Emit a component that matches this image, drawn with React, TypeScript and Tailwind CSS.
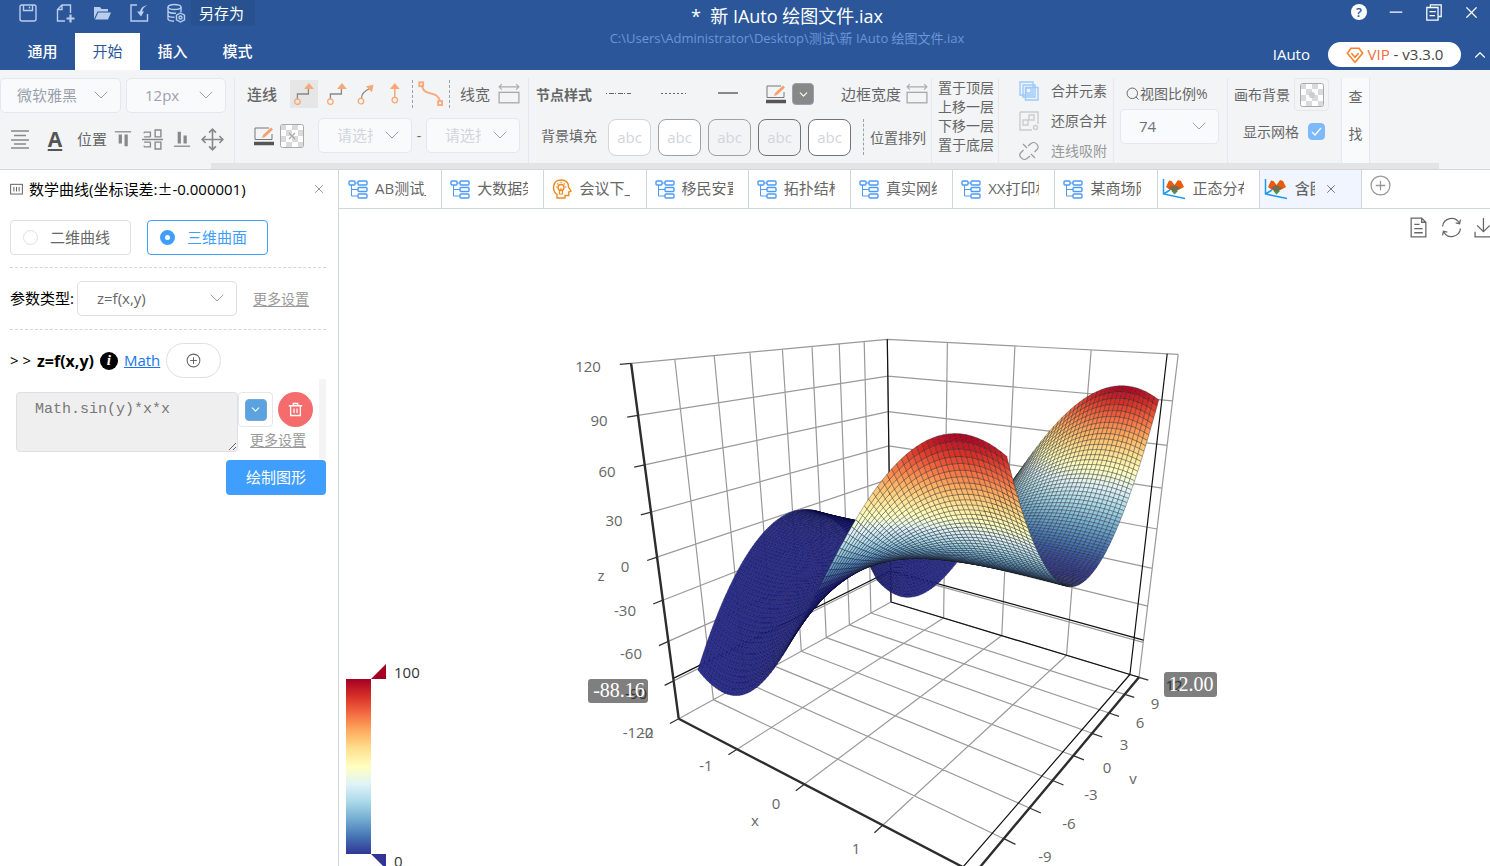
import { useMemo, useState, type ReactNode } from "react";
import { ChevronDown, ChevronUp, Minus, X } from "lucide-react";
import clsx from "clsx";

type Vec3 = [number, number, number];

/* ---------- 3D chart ---------- */

const CHART_W = 1151;
const CHART_H = 657;

const RAMP = [
  [49, 54, 149],
  [69, 117, 180],
  [116, 173, 209],
  [171, 217, 233],
  [224, 243, 248],
  [255, 255, 191],
  [254, 224, 144],
  [253, 174, 97],
  [244, 109, 67],
  [215, 48, 39],
  [165, 0, 38],
];

function rampColor(z: number) {
  const t = Math.min(Math.max(z / 100, 0), 1) * (RAMP.length - 1);
  const i = Math.min(Math.floor(t), RAMP.length - 2);
  const f = t - i;
  const [r, g, b] = RAMP[i].map((c, k) => Math.round(c + (RAMP[i + 1][k] - c) * f));
  return `rgb(${r},${g},${b})`;
}

// Distance from the camera, relative to the front left bottom corner of the box
function depth(u: number, v: number, w: number) {
  return 1 - 0.263 * u + 0.368 * v - 0.1663 * w;
}

// Perspective projection of the unit box (u = x axis, v = y axis, w = z axis)
function project([u, v, w]: Vec3) {
  const d = depth(u, v, w);
  const x = (339.7 + 128.9 * u + 415.4 * v - 96.2 * w) / d;
  const y = (509.7 - 20.1 * u + 27.9 * v - 381 * w) / d;
  return `${x.toFixed(1)} ${y.toFixed(1)}`;
}

const seg = (a: Vec3, b: Vec3) => `M${project(a)}L${project(b)}`;

function buildSurface() {
  const NX = 79;
  const NY = 100;
  const at = (i: number, j: number): Vec3 => {
    const x = -2 + 0.05 * i;
    const y = -10 + 0.2 * j;
    const z = Math.sin(x) * y * y;
    return [(x + 2) / 4, (y + 12) / 24, (z + 120) / 240];
  };
  const cells: { d: string; fill: string; line: string; far: number }[] = [];
  for (let i = 0; i < NX; i++) {
    for (let j = 0; j < NY; j++) {
      const mid = at(i + 0.5, j + 0.5);
      const z = mid[2] * 240 - 120;
      cells.push({
        d: `M${project(at(i, j))}L${project(at(i + 1, j))}L${project(at(i + 1, j + 1))}L${project(at(i, j + 1))}Z`,
        fill: z < 0 ? "#2c3090" : rampColor(z),
        line: z < 0 ? "#0a0a38" : "#1a1a1a",
        far: depth(...mid),
      });
    }
  }
  return cells.sort((p, q) => q.far - p.far);
}

function buildGrid() {
  let grid = "";
  let ticks = "";
  for (let i = 0; i <= 8; i++) {
    const t = i / 8;
    grid += seg([0, t, 0], [0, t, 1]) + seg([0, 0, t], [0, 1, t]);
    grid += seg([0, 1, t], [1, 1, t]) + seg([0, t, 0], [1, t, 0]);
    ticks += seg([0, 0, t], [0, -0.03, t]) + seg([1, t, 0], [1.03, t, 0]);
  }
  for (let i = 0; i <= 4; i++) {
    const t = i / 4;
    grid += seg([t, 1, 0], [t, 1, 1]) + seg([t, 0, 0], [t, 1, 0]);
    ticks += seg([t, 0, 0], [t, -0.03, 0]);
  }
  const pointer =
    seg([0, 1, 0], [0, 1, 1]) +
    seg([0, 1, 0], [1, 1, 0]) +
    seg([0.97, 1, 0], [0.97, 1, 1]) +
    seg([0.97, 0, 0], [0.97, 1, 0]) +
    seg([0, 0, 0.133], [0, 1, 0.133]) +
    seg([0, 1, 0.133], [1, 1, 0.133]);
  const axes = seg([0, 0, 0], [0, 0, 1]) + seg([0, 0, 0], [1, 0, 0]) + seg([1, 0, 0], [1, 1, 0]);
  return { grid, ticks, pointer, axes };
}

const AXIS_LABELS: [string, number, number][] = [
  ["120", 249, 158],
  ["90", 260, 212],
  ["60", 268, 263],
  ["30", 275, 312],
  ["0", 286, 358],
  ["-30", 286, 402],
  ["-60", 292, 445],
  ["-90", 297, 485],
  ["-120", 299, 524],
  ["-2", 308, 524],
  ["z", 262, 367],
  ["-1", 367, 557],
  ["0", 437, 595],
  ["1", 517, 640],
  ["x", 416, 612],
  ["12", 835, 477],
  ["9", 816, 495],
  ["6", 801, 514],
  ["3", 785, 536],
  ["0", 768, 559],
  ["-3", 752, 586],
  ["-6", 730, 615],
  ["-9", 706, 648],
  ["v", 794, 570],
];

function SurfaceChart() {
  const cells = useMemo(buildSurface, []);
  const { grid, ticks, pointer, axes } = useMemo(buildGrid, []);
  return (
    <svg
      viewBox={`0 0 ${CHART_W} ${CHART_H}`}
      preserveAspectRatio="xMinYMin slice"
      className="block h-full w-full font-['Open_Sans','Noto_Sans_CJK_SC',sans-serif]"
    >
      <defs>
        <linearGradient id="ramp" x1="0" y1="1" x2="0" y2="0">
          {RAMP.map(([r, g, b], i) => (
            <stop key={i} offset={i / (RAMP.length - 1)} stopColor={`rgb(${r},${g},${b})`} />
          ))}
        </linearGradient>
      </defs>

      <path d={grid} fill="none" stroke="#999" strokeWidth="1.2" />
      <path d={pointer} fill="none" stroke="#111" strokeWidth="1.2" />
      <path d={ticks} fill="none" stroke="#333" strokeWidth="1.3" />
      <path d={axes} fill="none" stroke="#2d2d2d" strokeWidth="2.4" />

      <g strokeOpacity="0.5" strokeWidth="0.7" strokeLinejoin="round">
        {cells.map((c, i) => (
          <path key={i} d={c.d} fill={c.fill} stroke={c.line} />
        ))}
      </g>

      <g fill="#666" fontSize="15" textAnchor="middle">
        {AXIS_LABELS.map(([label, x, y], i) => (
          <text key={i} x={x} y={y + 5}>
            {label}
          </text>
        ))}
      </g>

      <g fontFamily="'Liberation Serif', serif" fontSize="20" textAnchor="middle">
        <rect x="249" y="470" width="60" height="24" rx="3" fill="#000" fillOpacity="0.5" />
        <text x="280" y="488" fill="#fff">-88.16</text>
        <rect x="825" y="463" width="53" height="25" rx="3" fill="#000" fillOpacity="0.5" />
        <text x="852" y="482" fill="#fff">12.00</text>
      </g>

      <rect x="7" y="470" width="25" height="175" fill="url(#ramp)" />
      <path d="M32 470L47 455V470Z" fill="#a50026" />
      <path d="M32 645L47 660V645Z" fill="#313695" />
      <g fill="#333" fontSize="15">
        <text x="55" y="469">100</text>
        <text x="55" y="658">0</text>
      </g>
    </svg>
  );
}

/* ---------- icons ---------- */

interface IconProps {
  size?: number;
  children: ReactNode;
  className?: string;
}

function Icon({ size = 20, children, className }: IconProps) {
  return (
    <svg
      width={size}
      height={size}
      viewBox="0 0 20 20"
      fill="none"
      stroke="currentColor"
      strokeWidth="1.4"
      className={clsx("block shrink-0", className)}
    >
      {children}
    </svg>
  );
}

const SaveIcon = () => (
  <Icon>
    <rect x="2" y="2" width="16" height="16" rx="2" />
    <path d="M5.500 2V7.500H14.500V2M11.500 3.500V5.500" />
  </Icon>
);

const NewFileIcon = () => (
  <Icon>
    <path d="M10 18H2.500V6.500L7 2H15.500V10M7 2V6.500H2.500" />
    <path d="M15.500 11.500V19.500M11.500 15.500H19.500" strokeWidth="2.200" />
  </Icon>
);

const OpenIcon = () => (
  <Icon>
    <path d="M2 16V4H8L9.500 6H16V8.500H5.500L2 16Z" fill="currentColor" stroke="none" />
    <path d="M6.200 9.500H19L16 16.500H3Z" fill="currentColor" stroke="none" />
  </Icon>
);

const ImportIcon = () => (
  <Icon>
    <path d="M8 2H2V18H18.500V11" />
    <path d="M18.500 2C14 3 11.500 5 11 8.500H8L12 13.500L15 8.500H13.200C13.500 6 15 4 18.500 2Z" fill="currentColor" stroke="none" />
  </Icon>
);

const DatabaseIcon = () => (
  <Icon>
    <ellipse cx="8.500" cy="4" rx="6.500" ry="2.500" />
    <path d="M2 4V16C2 17.300 4 18 8 18.300M15 4V9M2 8C2 9.500 5 10.500 10 10.200M2 12C2 13.500 5 14.300 8.500 14.300" />
    <path d="M14.500 10L18.500 12.200V16.800L14.500 19L10.500 16.800V12.200Z" />
    <circle cx="14.500" cy="14.500" r="1.500" />
  </Icon>
);

const RestoreIcon = () => (
  <Icon size={18}>
    <path d="M6 5V2H18V15H15" />
    <path d="M2 5H14.500V19H2ZM5 9.500H12M5 14H11" />
  </Icon>
);

const DiamondIcon = () => (
  <Icon size={18} className="text-[#f5802a]">
    <path d="M5.500 2.500H14.500L18.500 8L10 18L1.500 8ZM6 8L10 12.500L14 8" strokeWidth="1.700" />
  </Icon>
);

const TreeIcon = () => (
  <Icon className="text-[#4d9bf5]">
    <rect x="1" y="2" width="6" height="4" rx="1" />
    <rect x="10" y="2" width="9" height="4" rx="1" />
    <rect x="10" y="8.500" width="9" height="4" rx="1" />
    <rect x="10" y="15" width="9" height="4" rx="1" />
    <path d="M7 4H10M3.500 6V17H10M3.500 10.500H10" strokeWidth="1" />
  </Icon>
);

const HeadIcon = () => (
  <Icon className="text-[#ee8a1f]">
    <path d="M5 19V15.500C0 12 0 1 9 1C15 1 16.500 4.500 16.500 8L19 12L16.800 13V16.500H13V19Z" />
    <circle cx="9" cy="8.500" r="3" />
    <path d="M7.500 11.500V15H10.500V11.500M9 9V12M9 2.500V4M4 8H5M13 8H14.500M5.300 4.500L6.300 5.500M12.700 4.500L11.700 5.500" strokeWidth="1.200" />
  </Icon>
);

const PlotIcon = () => (
  <svg width="24" height="22" viewBox="0 0 24 22" className="block shrink-0">
    <path d="M1.500 1V16L23 20.500M1.500 16L8 12" fill="none" stroke="#1e9be8" strokeWidth="1.500" />
    <path d="M4 9L7 2.500L9.500 3L12.500 7L16 2L19 3L22 9L16.500 12H8Z" fill="#ea5b0c" />
    <path d="M7 9.500L12 7L18 9.500L12.500 16Z" fill="#7a6a4f" />
    <path d="M9.500 13L12.500 16.500L16 13Z" fill="#3f9a55" />
  </svg>
);

const WidthIcon = () => (
  <Icon size={22} className="text-[#aaa]">
    <path d="M1 3.500H19M3.500 1L1 3.500L3.500 6M16.500 1L19 3.500L16.500 6" strokeWidth="1" />
    <rect x="1" y="8.500" width="18" height="9.500" strokeWidth="1.200" />
  </Icon>
);

const PenIcon = () => (
  <Icon className="text-[#777]">
    <path d="M15 2H1V13.500H18V8" strokeWidth="1" />
    <path d="M8 12L9 9L17 1.500L19 3.500L11 11Z" fill="#f5a070" stroke="none" />
    <path d="M0 17.500H20" stroke="#555" strokeWidth="3.500" />
  </Icon>
);

const CheckerIcon = ({ dot = false }: { dot?: boolean }) => (
  <svg width="24" height="24" viewBox="0 0 24 24" className="block">
    <rect x="0.500" y="0.500" width="23" height="23" rx="2" fill="#fff" stroke="#aaa" />
    <path d="M1 1H6V6H1ZM12 1H18V6H12ZM6 6H12V12H6ZM18 6H23V12H18ZM1 12H6V18H1ZM12 12H18V18H12ZM6 18H12V23H6ZM18 18H23V23H18Z" fill="#dadada" />
    {dot ? <circle cx="12" cy="12" r="3" fill="#ccc" /> : <path d="M9 9L15 15M15 9L9 15" stroke="#aaa" strokeWidth="1.300" />}
  </svg>
);

const LinkArrow = ({ kind }: { kind: "step" | "curve" | "up" }) => (
  <Icon size={22}>
    {kind === "step" && (
      <>
        <path d="M4 15V10H14V5" stroke="#888" strokeWidth="1.200" />
        <path d="M10 5.500L14.500 0L19 5.500Z" fill="#f7a877" stroke="none" />
        <circle cx="4" cy="17" r="2.500" stroke="#f7a877" strokeWidth="1.200" />
      </>
    )}
    {kind === "curve" && (
      <>
        <path d="M5 14C5 10 8 7 12.500 5" stroke="#888" strokeWidth="1.200" />
        <path d="M9 3L16 1.500L14.500 8.500Z" fill="#f7a877" stroke="none" />
        <circle cx="4.500" cy="16.500" r="2.500" stroke="#f7a877" strokeWidth="1.200" />
      </>
    )}
    {kind === "up" && (
      <>
        <path d="M8 13V4" stroke="#f7a877" strokeWidth="1.400" />
        <path d="M3.500 5.500L8 0L12.500 5.500Z" fill="#f7a877" stroke="none" />
        <circle cx="8" cy="15.500" r="2.500" stroke="#f7a877" strokeWidth="1.200" />
      </>
    )}
  </Icon>
);

/* ---------- small controls ---------- */

interface PickerProps {
  label: string;
  value: string;
  className?: string;
  fieldClass: string;
}

function Picker({ label, value, className, fieldClass }: PickerProps) {
  return (
    <div className={clsx("relative shrink-0", className)}>
      <select
        aria-label={label}
        className={clsx("block h-[35px] w-full appearance-none rounded-[5px] border text-[15px] outline-none", fieldClass)}
      >
        <option>{value}</option>
      </select>
      <ChevronDown
        size={24}
        strokeWidth={1}
        className="pointer-events-none absolute top-[5px] right-2 text-gray-400"
      />
    </div>
  );
}

function Group({ className, children }: { className?: string; children: ReactNode }) {
  return <div className={clsx("h-[86px] shrink-0 border-r border-gray-200", className)}>{children}</div>;
}

const Dash = () => <div className="h-7 shrink-0 border-l border-dashed border-gray-400" />;

/* ---------- header ---------- */

const MENUS = ["通用", "开始", "插入", "模式"];

function Header() {
  const [menu, setMenu] = useState("开始");
  return (
    <header className="flex h-[70px] shrink-0 bg-[#2b579a] text-white">
      <div className="flex w-[384px] shrink-0 flex-col justify-between">
        <div className="flex h-[26px] items-center pl-[18px] text-[#b9cdec]">
          <div className="flex w-[173px] gap-[17px]">
            <button aria-label="保存"><SaveIcon /></button>
            <button aria-label="新建"><NewFileIcon /></button>
            <button aria-label="打开"><OpenIcon /></button>
            <button aria-label="导入"><ImportIcon /></button>
            <button aria-label="数据"><DatabaseIcon /></button>
          </div>
          <button className="h-[26px] w-16 bg-[#27528f] pl-2 text-left text-[15px] text-white">另存为</button>
        </div>
        <nav className="flex pl-[10px]">
          {MENUS.map((m) => (
            <button
              key={m}
              onClick={() => setMenu(m)}
              className={clsx("h-[37px] w-[65px] text-[15px]", m === menu ? "bg-white text-[#2b579a]" : "font-medium")}
            >
              {m}
            </button>
          ))}
        </nav>
      </div>
      <div className="flex flex-1 flex-col items-center pt-1">
        <h1 className="text-[18px] leading-6 whitespace-pre">*  新 IAuto 绘图文件.iax</h1>
        <p className="text-[13px] leading-5 text-[#6c95d8]">C:\Users\Administrator\Desktop\测试\新 IAuto 绘图文件.iax</p>
      </div>
      <div className="flex w-[300px] shrink-0 flex-col">
        <div className="flex h-6 items-center justify-end gap-[19px] pr-[9px]">
          <button aria-label="帮助" className="h-4 w-4 rounded-full bg-white text-[13px] leading-4 font-semibold text-[#2b579a]">?</button>
          <button aria-label="最小化"><Minus size={20} strokeWidth={1.5} /></button>
          <button aria-label="还原"><RestoreIcon /></button>
          <button aria-label="关闭"><X size={19} strokeWidth={1.5} /></button>
        </div>
        <div className="flex h-[46px] items-center justify-end pt-[15px]">
          <span className="mr-[18px] text-[15px] font-medium">IAuto</span>
          <button className="flex h-[25px] w-[133px] items-center justify-center gap-1 rounded-full bg-white text-[15px] text-[#444]">
            <DiamondIcon />
            <span><span className="text-[#f56c3c]">VIP</span> - v3.3.0</span>
          </button>
          <button aria-label="收起" className="ml-[10px] mr-px"><ChevronUp size={18} strokeWidth={1.5} /></button>
        </div>
      </div>
    </header>
  );
}

/* ---------- ribbon ---------- */

const NODE_FILLS = [
  "border-neutral-300 bg-white",
  "border-neutral-400 bg-white",
  "border-neutral-400 bg-gray-100",
  "border-neutral-500 bg-gray-100",
  "border-neutral-500 bg-white",
];

function Ribbon() {
  const [grid, setGrid] = useState(true);
  return (
    <section className="flex h-[100px] shrink-0 flex-col overflow-hidden border-b border-gray-300 bg-[#f3f4f6] text-[14px] text-[#666]">
      <div className="flex h-[93px] pt-2">
        <Group className="w-[235px]">
          <div className="flex gap-[5px]">
            <Picker label="字体" value="微软雅黑" className="w-[121px]" fieldClass="border-gray-200 bg-gray-50 pl-4 text-gray-400" />
            <Picker label="字号" value="12px" className="w-[100px]" fieldClass="border-gray-200 bg-gray-50 pl-[18px] text-gray-400" />
          </div>
          <div className="flex h-[52px] items-center pl-[10px] text-[#888]">
            <button aria-label="对齐"><Icon><path d="M1 2H19M4 6.500H16M1 11H19M4 15H16M1 19H19" strokeWidth="1.600" /></Icon></button>
            <button aria-label="文字颜色" className="mr-3 ml-[15px] w-5 text-[21px] leading-6 font-bold text-[#555] underline underline-offset-2">A</button>
            <span className="w-[37px] text-[15px] text-[#666]">位置</span>
            <div className="flex items-center gap-[10px]">
              <button aria-label="顶部"><Icon size={18}><path d="M1 2H19" /><path d="M7 5V15M13.500 5V18" strokeWidth="3.600" /></Icon></button>
              <button aria-label="居中"><Icon size={21}><path d="M2 3H8V7.500M2 3V4M12.500 1H18V7.500H12.500ZM2 17H8V12.500M2 17V16M12.500 12.500H18V19H12.500ZM0 10H20M2 7.500H8M2 12.500H8" strokeWidth="1.300" /></Icon></button>
              <button aria-label="底部"><Icon size={18}><path d="M1 18H19" /><path d="M7 2V15M13.500 6V15" strokeWidth="3.600" /></Icon></button>
              <button aria-label="移动"><Icon size={23}><path d="M10 1V19M1 10H19M7 4L10 1L13 4M7 16L10 19L13 16M4 7L1 10L4 13M16 7L19 10L16 13" /></Icon></button>
            </div>
          </div>
        </Group>

        <Group className="w-[294px] pl-3">
          <div className="flex h-8 items-center">
            <span className="w-[43px] text-[15px] font-medium">连线</span>
            <button aria-label="折线" className="mr-2 flex h-7 w-7 items-center justify-center bg-[#e6e6e6]"><LinkArrow kind="step" /></button>
            <button aria-label="折线箭头" className="mr-2"><LinkArrow kind="step" /></button>
            <button aria-label="曲线" className="mr-2"><LinkArrow kind="curve" /></button>
            <button aria-label="直线" className="mr-1"><LinkArrow kind="up" /></button>
            <Dash />
            <button aria-label="自由曲线" className="mx-[5px]">
              <Icon size={26} className="text-[#f7a877]">
                <path d="M3 3C4 13 15 6 17 16" />
                <rect x="1" y="1" width="3" height="3" />
                <rect x="15.500" y="15.500" width="3" height="3" />
              </Icon>
            </button>
            <Dash />
            <span className="mr-2 ml-[10px] w-[30px] shrink-0 text-[15px] whitespace-nowrap">线宽</span>
            <WidthIcon />
          </div>
          <div className="flex h-[47px] items-center pt-1 pl-[7px]">
            <PenIcon />
            <button aria-label="线条背景" className="mr-[9px] flex h-[35px] w-[35px] items-center justify-center rounded border border-gray-100"><CheckerIcon /></button>
            <Picker label="起点" value="请选择" className="w-[94px]" fieldClass="border-gray-200 bg-gray-50 pl-[18px] pr-[38px] text-gray-300" />
            <span className="w-[14px] text-center">-</span>
            <Picker label="终点" value="请选择" className="w-[94px]" fieldClass="border-gray-200 bg-gray-50 pl-[18px] pr-[38px] text-gray-300" />
          </div>
        </Group>

        <Group className="w-[403px] pl-[7px]">
          <div className="flex h-8 items-center">
            <span className="w-[70px] font-bold">节点样式</span>
            <button aria-label="点划线" className="mr-[30px] w-[25px]"><svg width="25" height="4" className="block"><path d="M0 1.500H25" stroke="#666" strokeDasharray="1 2 5 1" /></svg></button>
            <button aria-label="虚线" className="mr-8 w-[25px]"><svg width="25" height="4" className="block"><path d="M0 1.500H25" stroke="#666" strokeDasharray="2 2" /></svg></button>
            <button aria-label="实线" className="mr-[28px] w-5"><svg width="20" height="4" className="block"><path d="M0 1H20" stroke="#888" strokeWidth="2" /></svg></button>
            <PenIcon />
            <button aria-label="边框颜色" className="mr-[21px] flex h-8 w-[34px] items-center justify-center rounded border border-gray-100">
              <span className="flex h-[22px] w-[22px] items-center justify-center rounded-sm border border-gray-400 bg-[#888] text-white"><ChevronDown size={13} /></span>
            </button>
            <span className="w-[65px] text-[15px] whitespace-nowrap">边框宽度</span>
            <WidthIcon />
          </div>
          <div className="flex h-[50px] items-center pt-1 pl-[5px]">
            <span className="mb-1 w-[67px]">背景填充</span>
            <div className="flex gap-[7px]">
              {NODE_FILLS.map((fill, i) => (
                <button key={i} className={clsx("h-[37px] w-[43px] rounded-lg border text-[15px] text-gray-300", fill)}>abc</button>
              ))}
            </div>
            <div className="mx-[6px] ml-3 h-9 border-l border-dashed border-gray-400" />
            <button className="whitespace-nowrap">位置排列</button>
          </div>
        </Group>

        <Group className="flex w-[67px] flex-col pl-[6px] leading-[19px]">
          <button className="text-left">置于顶层</button>
          <button className="text-left">上移一层</button>
          <button className="text-left">下移一层</button>
          <button className="text-left">置于底层</button>
        </Group>

        <Group className="flex w-[115px] flex-col gap-[10px] pl-5 leading-5">
          <button className="flex items-center gap-3 pt-[3px]">
            <Icon className="text-[#9cc9fb]"><path d="M1 1H14V14H1ZM4 4H16V16H4ZM6.500 6.500H19V19H6.500Z" /><path d="M7 7H12V12H7Z" /></Icon>
            合并元素
          </button>
          <button className="flex items-center gap-3">
            <Icon className="text-[#ccc]"><path d="M1 1H19V13M13 19H1V1M4 9H9V14H4ZM10 4H15V9H10Z" /><circle cx="16.500" cy="16.500" r="2" /></Icon>
            还原合并
          </button>
          <button className="flex items-center gap-3 whitespace-nowrap text-[#999]">
            <Icon><path d="M9 5L12 2.500C16 -0.500 21.500 5 18 8.500L15.500 11M11 15L8 17.500C4 20.500 -1.500 15 2 11.500L4.500 9M4 3L8 7M12 13L16 17" strokeWidth="1.200" /></Icon>
            连线吸附
          </button>
        </Group>

        <Group className="w-[114px] pl-[6px]">
          <div className="flex h-[31px] items-center pl-[6px] whitespace-nowrap">
            <Icon size={14}><circle cx="9" cy="9" r="7.500" /><path d="M14 14L18 18" /></Icon>
            视图比例%
          </div>
          <Picker label="视图比例" value="74" className="w-[99px]" fieldClass="border-gray-200 bg-gray-50 pl-[18px] text-gray-500" />
        </Group>

        <Group className="w-[114px] pl-[6px]">
          <div className="flex h-[33px] items-center gap-1">
            <span className="w-[56px] whitespace-nowrap">画布背景</span>
            <button aria-label="画布背景" className="flex h-[33px] w-[35px] items-center justify-center rounded border border-gray-200"><CheckerIcon dot /></button>
          </div>
          <label className="flex h-10 items-center gap-[9px] pl-[9px]">
            显示网格
            <span className="relative h-[17px] w-[17px]">
              <input
                type="checkbox"
                checked={grid}
                onChange={(e) => setGrid(e.target.checked)}
                className="block h-[17px] w-[17px] appearance-none rounded-sm border border-gray-300 checked:border-[#7db9fb] checked:bg-[#7db9fb]"
              />
              <svg viewBox="0 0 17 17" className="pointer-events-none absolute inset-0"><path d="M4 9L7 12L13 5" fill="none" stroke="#fff" strokeWidth="1.300" /></svg>
            </span>
          </label>
        </Group>

        <button className="flex h-[86px] w-7 shrink-0 flex-col items-center justify-center gap-4 border-r border-gray-200 bg-gray-50 pb-3">
          <span>查</span>
          <span>找</span>
        </button>
      </div>
      <div className="mr-[51px] ml-[211px] h-[6px] bg-[#e4e4e4]" />
    </section>
  );
}

/* ---------- left panel ---------- */

function MoreLink() {
  return <a href="#more" className="text-[14px] text-[#999] underline underline-offset-2">更多设置</a>;
}

function MathPanel() {
  const [mode, setMode] = useState("3d");
  const [formula, setFormula] = useState("Math.sin(y)*x*x");
  const modes = [
    { id: "2d", label: "二维曲线" },
    { id: "3d", label: "三维曲面" },
  ];
  return (
    <aside className="w-[339px] shrink-0 border-r border-gray-300 bg-white pr-3 pl-[10px] text-[15px]">
      <div className="flex h-[38px] items-center">
        <Icon size={13} className="mr-[6px] text-[#555]"><rect x="1" y="2" width="18" height="15" /><path d="M6 6V13M10 6V13M14 6V13" /></Icon>
        <h2 className="flex-1 leading-5 whitespace-nowrap">
          数学曲线(坐标误差:<span className="font-['Noto_Sans_CJK_SC',sans-serif]">±</span>-0.000001)
        </h2>
        <button aria-label="关闭" className="text-[#888]"><X size={14} strokeWidth={1.5} /></button>
      </div>

      <div className="flex gap-4 border-b border-dashed border-gray-300 pt-3 pb-3">
        {modes.map((m) => (
          <label
            key={m.id}
            className={clsx(
              "flex h-[35px] w-[121px] items-center gap-3 rounded border pl-3",
              mode === m.id ? "border-[#409eff] text-[#409eff]" : "border-[#dcdfe6] text-[#666]"
            )}
          >
            <input
              type="radio"
              name="mode"
              checked={mode === m.id}
              onChange={() => setMode(m.id)}
              className="h-[15px] w-[15px] appearance-none rounded-full border border-[#dcdfe6] checked:border-[5px] checked:border-[#409eff]"
            />
            {m.label}
          </label>
        ))}
      </div>

      <div className="flex h-[62px] items-center border-b border-dashed border-gray-300">
        <span className="w-[67px] shrink-0 whitespace-nowrap">参数类型:</span>
        <Picker label="参数类型" value="z=f(x,y)" className="mr-4 w-[160px]" fieldClass="border-[#dcdfe6] bg-white pl-[19px] text-[#666]" />
        <MoreLink />
      </div>

      <div className="flex h-12 items-end">
        <div className="flex h-[35px] items-center">
          <span className="mr-[6px] w-[21px] whitespace-nowrap">&gt; &gt;</span>
          <b className="mr-[6px] text-[16px]">z=f(x,y)</b>
          <span className="mr-[6px] flex h-[18px] w-[18px] items-center justify-center rounded-full bg-black font-['Liberation_Serif',serif] font-bold text-white italic">i</span>
          <a href="#math" className="mr-[6px] text-[#1a73e8] underline">Math</a>
          <button aria-label="添加" className="flex h-[35px] w-[55px] items-center justify-center rounded-full border border-[#dcdfe6] text-[#666]">
            <Icon size={15}><circle cx="10" cy="10" r="8.500" /><path d="M10 5.500V14.500M5.500 10H14.500" /></Icon>
          </button>
        </div>
      </div>

      <div className="flex h-[82px] pl-[6px]">
        <textarea
          aria-label="公式"
          value={formula}
          onChange={(e) => setFormula(e.target.value)}
          className="mt-[14px] h-[60px] w-[222px] shrink-0 rounded border border-[#dcdfe6] bg-[#efefef] px-[18px] py-[7px] font-['Liberation_Mono',monospace] text-[15px] leading-5 text-[#777] outline-none"
        />
        <div className="flex-1 pt-[14px]">
          <div className="flex gap-[5px]">
            <button aria-label="颜色" className="flex h-[35px] w-[35px] items-center justify-center rounded border border-gray-200">
              <span className="flex h-[22px] w-[22px] items-center justify-center rounded-sm border border-[#7ba7cc] bg-[#5ba3e0] text-white"><ChevronDown size={13} /></span>
            </button>
            <button aria-label="删除" className="flex h-[35px] w-[35px] items-center justify-center rounded-full bg-[#f56c6c] text-white">
              <Icon size={15}><path d="M1 5H19M7 5V2H13V5M3.500 5V18H16.500V5M8 8.500V14.500M12 8.500V14.500" strokeWidth="1.700" /></Icon>
            </button>
          </div>
          <div className="pt-[2px] pl-3 leading-5"><MoreLink /></div>
        </div>
        <div className="mt-px h-20 w-[7px] bg-[#f4f4f4]" />
      </div>

      <button className="ml-auto block h-[35px] w-[100px] rounded bg-[#409eff] text-white">绘制图形</button>
    </aside>
  );
}

/* ---------- workspace ---------- */

const TABS = [
  { title: "AB测试_1", icon: TreeIcon },
  { title: "大数据架构", icon: TreeIcon },
  { title: "会议下_脑图", icon: HeadIcon },
  { title: "移民安置图", icon: TreeIcon },
  { title: "拓扑结构图", icon: TreeIcon },
  { title: "真实网络图", icon: TreeIcon },
  { title: "XX打印机", icon: TreeIcon },
  { title: "某商场网络", icon: TreeIcon },
  { title: "正态分布图", icon: PlotIcon },
];

function TabBar() {
  return (
    <div className="flex h-[39px] shrink-0 border-b border-gray-300 pl-px text-[15px] text-[#666]">
      <div className="grid w-[1022px] shrink-0 grid-cols-10">
        {TABS.map(({ title, icon: TabIcon }) => (
          <button key={title} className="flex items-center border-r border-gray-300 pb-px pl-2">
            <span className={clsx("w-[27px] shrink-0", TabIcon === PlotIcon && "-ml-1 mr-1")}><TabIcon /></span>
            <span className="w-[51px] overflow-hidden text-left whitespace-nowrap">{title}</span>
          </button>
        ))}
        <div className="flex items-center border-r border-gray-300 bg-[#f0f5ff] pb-px pl-2">
          <span className="-ml-1 mr-1 w-[27px] shrink-0"><PlotIcon /></span>
          <button className="w-5 overflow-hidden text-left font-medium whitespace-nowrap">含图曲面</button>
          <button aria-label="关闭标签" className="ml-[9px]"><X size={14} strokeWidth={1.5} /></button>
        </div>
      </div>
      <button aria-label="新建标签" className="ml-2 flex h-[31px] items-center text-[#999]">
        <Icon size={21}><circle cx="10" cy="10" r="9" strokeWidth="1.200" /><path d="M10 5.500V14.500M5.500 10H14.500" strokeWidth="1.200" /></Icon>
      </button>
    </div>
  );
}

export default function App() {
  return (
    <div className="flex h-screen flex-col overflow-hidden bg-white font-['Open_Sans','Noto_Sans_CJK_SC',sans-serif] text-black">
      <Header />
      <Ribbon />
      <div className="flex min-h-0 flex-1">
        <MathPanel />
        <main className="flex min-w-0 flex-1 flex-col">
          <TabBar />
          <div className="relative min-h-0 flex-1">
            <SurfaceChart />
            <div className="absolute top-2 right-0 flex gap-3 text-[#666]">
              <button aria-label="数据视图"><Icon size={21}><path d="M3 1H13L17 5V19H3ZM13 1V5H17M6 7H11M6 11H14M6 15H14" strokeWidth="1.200" /></Icon></button>
              <button aria-label="刷新"><Icon size={21}><path d="M1.500 9A8.500 8.500 0 0 1 17.500 6M18.500 11A8.500 8.500 0 0 1 2.500 14M18.500 2.500L17.700 6.500L14 5.500M1.500 17.500L2.300 13.500L6 14.500" strokeWidth="1.200" /></Icon></button>
              <button aria-label="下载" className="w-4 overflow-hidden"><Icon size={21}><path d="M9 1V14M3 8L9 14L15 8M1 14V19H19V14" strokeWidth="1.200" /></Icon></button>
            </div>
          </div>
        </main>
      </div>
    </div>
  );
}
